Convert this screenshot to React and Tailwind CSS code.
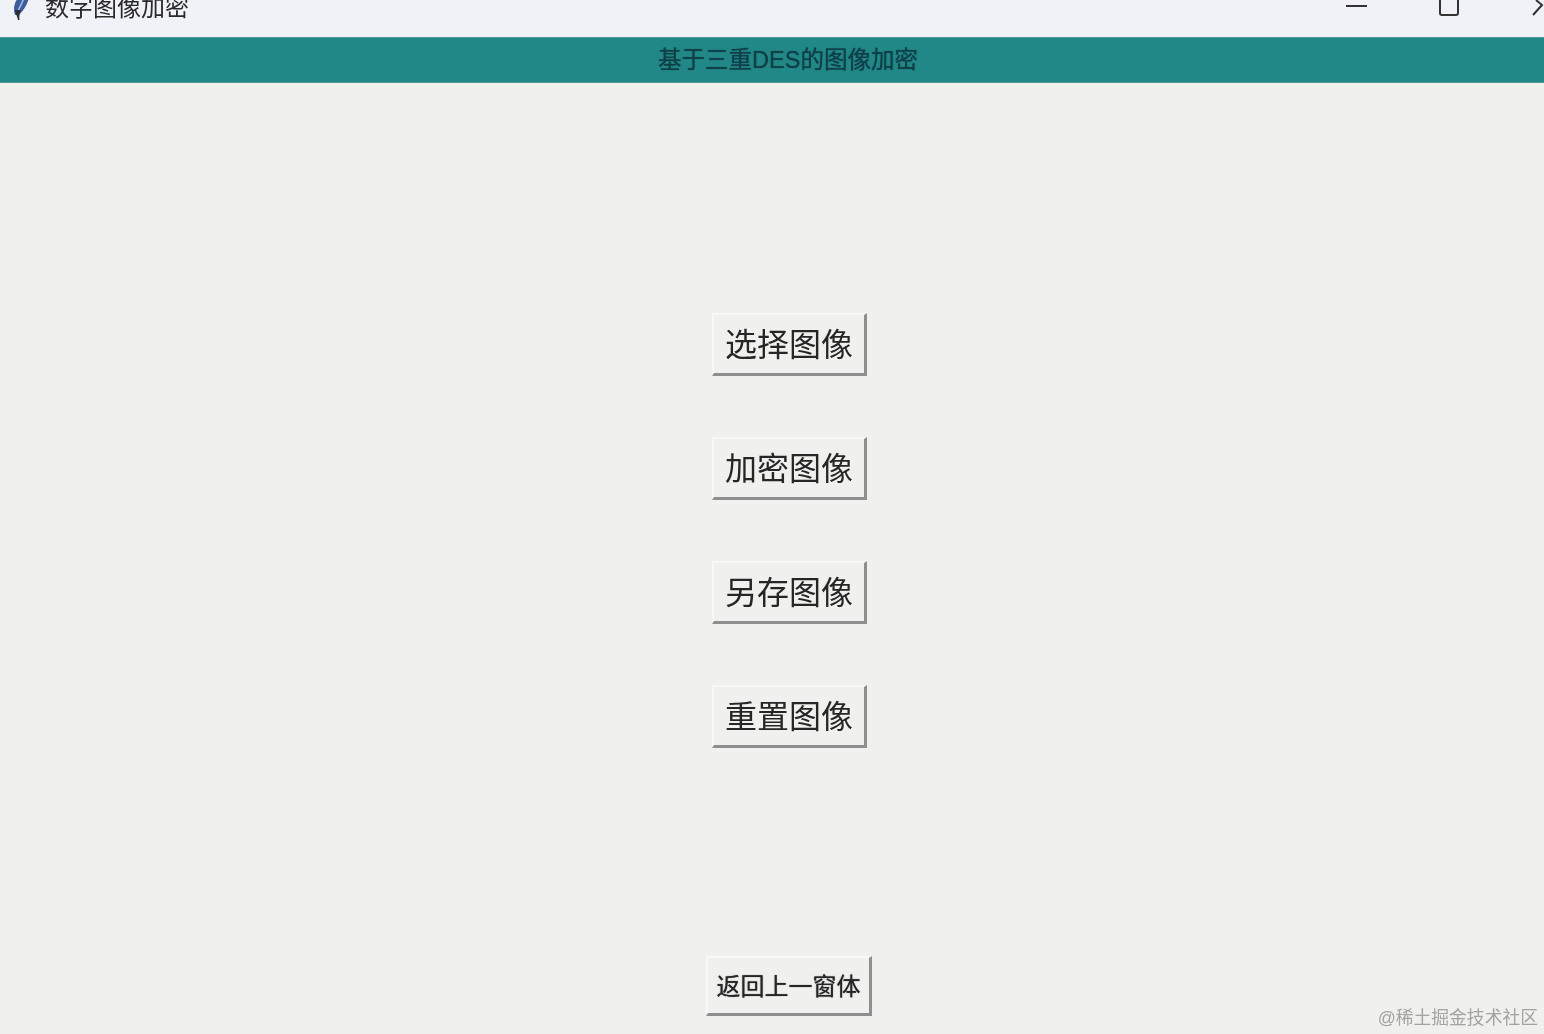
const FONT = "font-['Liberation_Sans','Noto_Sans_CJK_SC',sans-serif]";

const actions = ["选择图像", "加密图像", "另存图像", "重置图像"];

function Feather() {
  return (
    <svg width="18" height="22" viewBox="0 0 18 22" className="block">
      <path d="M17 -2 L6 -2 C2 3 1 9 3 15 L7 15 C12 10 15 5 17 -2 Z" fill="#3d5c9c" />
      <path d="M12 -2 C10 3 8 7 6 11" stroke="#a9bfe6" strokeWidth="1.5" fill="none" />
      <path d="M3 10 C3 13 5 15 6 20 L7.5 20 C7 16 7.5 13 9 10 Z" fill="#2c2f38" />
    </svg>
  );
}

function RaisedButton({ label, className }) {
  return (
    <button
      className={`flex items-center justify-center bg-[#f0f0ee] text-[#262626] border-t-2 border-l-2 border-t-[#f8f8f7] border-l-[#f8f8f7] border-b-[3px] border-r-[3px] border-b-[#8e8e8e] border-r-[#8e8e8e] ${className}`}
    >
      <span className="mt-[2px]">{label}</span>
    </button>
  );
}

export default function App() {
  return (
    <div className={`relative flex flex-col h-[1034px] overflow-hidden bg-[#f0f0ee] blur-[0.5px] ${FONT}`}>
      {/* title bar, cut off at the top of the shot */}
      <div className="flex items-start h-[37px] shrink-0 bg-[#f1f2f8] overflow-hidden">
        <div className="ml-[12px] w-[18px]">
          <Feather />
        </div>
        <span className="ml-[15px] mt-[-6px] text-[24px] leading-[28px] text-[#2a2a2a]">数字图像加密</span>
        <div className="ml-auto flex items-start">
          <div className="mt-[5px] w-[21px] h-[2px] bg-[#333]" />
          <div className="ml-[72px] mt-[-5px] w-[20px] h-[21px] border-2 border-[#333] rounded-[3px]" />
          <svg width="12" height="16" viewBox="0 0 12 16" className="ml-[73px]">
            <path d="M4 0 L10 5 L1 15" stroke="#333" strokeWidth="2" fill="none" />
          </svg>
        </div>
      </div>

      <div className="flex items-center justify-center h-[46px] shrink-0 bg-[#218887] border-y border-[#4f9a98] text-[23.5px] text-[#0f3f47] [text-shadow:0_0_1px_#0f3f47]">
        <span className="ml-[32px] mt-[2px]">基于三重DES的图像加密</span>
      </div>

      <div className="flex flex-col items-center pt-[230px] pl-[35px]">
        <div className="flex flex-col gap-[61px]">
          {actions.map((a) => (
            <RaisedButton key={a} label={a} className="w-[155px] h-[63px] text-[32px]" />
          ))}
        </div>
        <RaisedButton label="返回上一窗体" className="mt-[208px] mr-[1px] w-[166px] h-[60px] text-[24px] [text-shadow:0_0_1px_#333]" />
      </div>

      <span className="absolute right-[6px] bottom-[2px] text-[17.8px] text-[#a3a3a3]">@稀土掘金技术社区</span>
    </div>
  );
}
